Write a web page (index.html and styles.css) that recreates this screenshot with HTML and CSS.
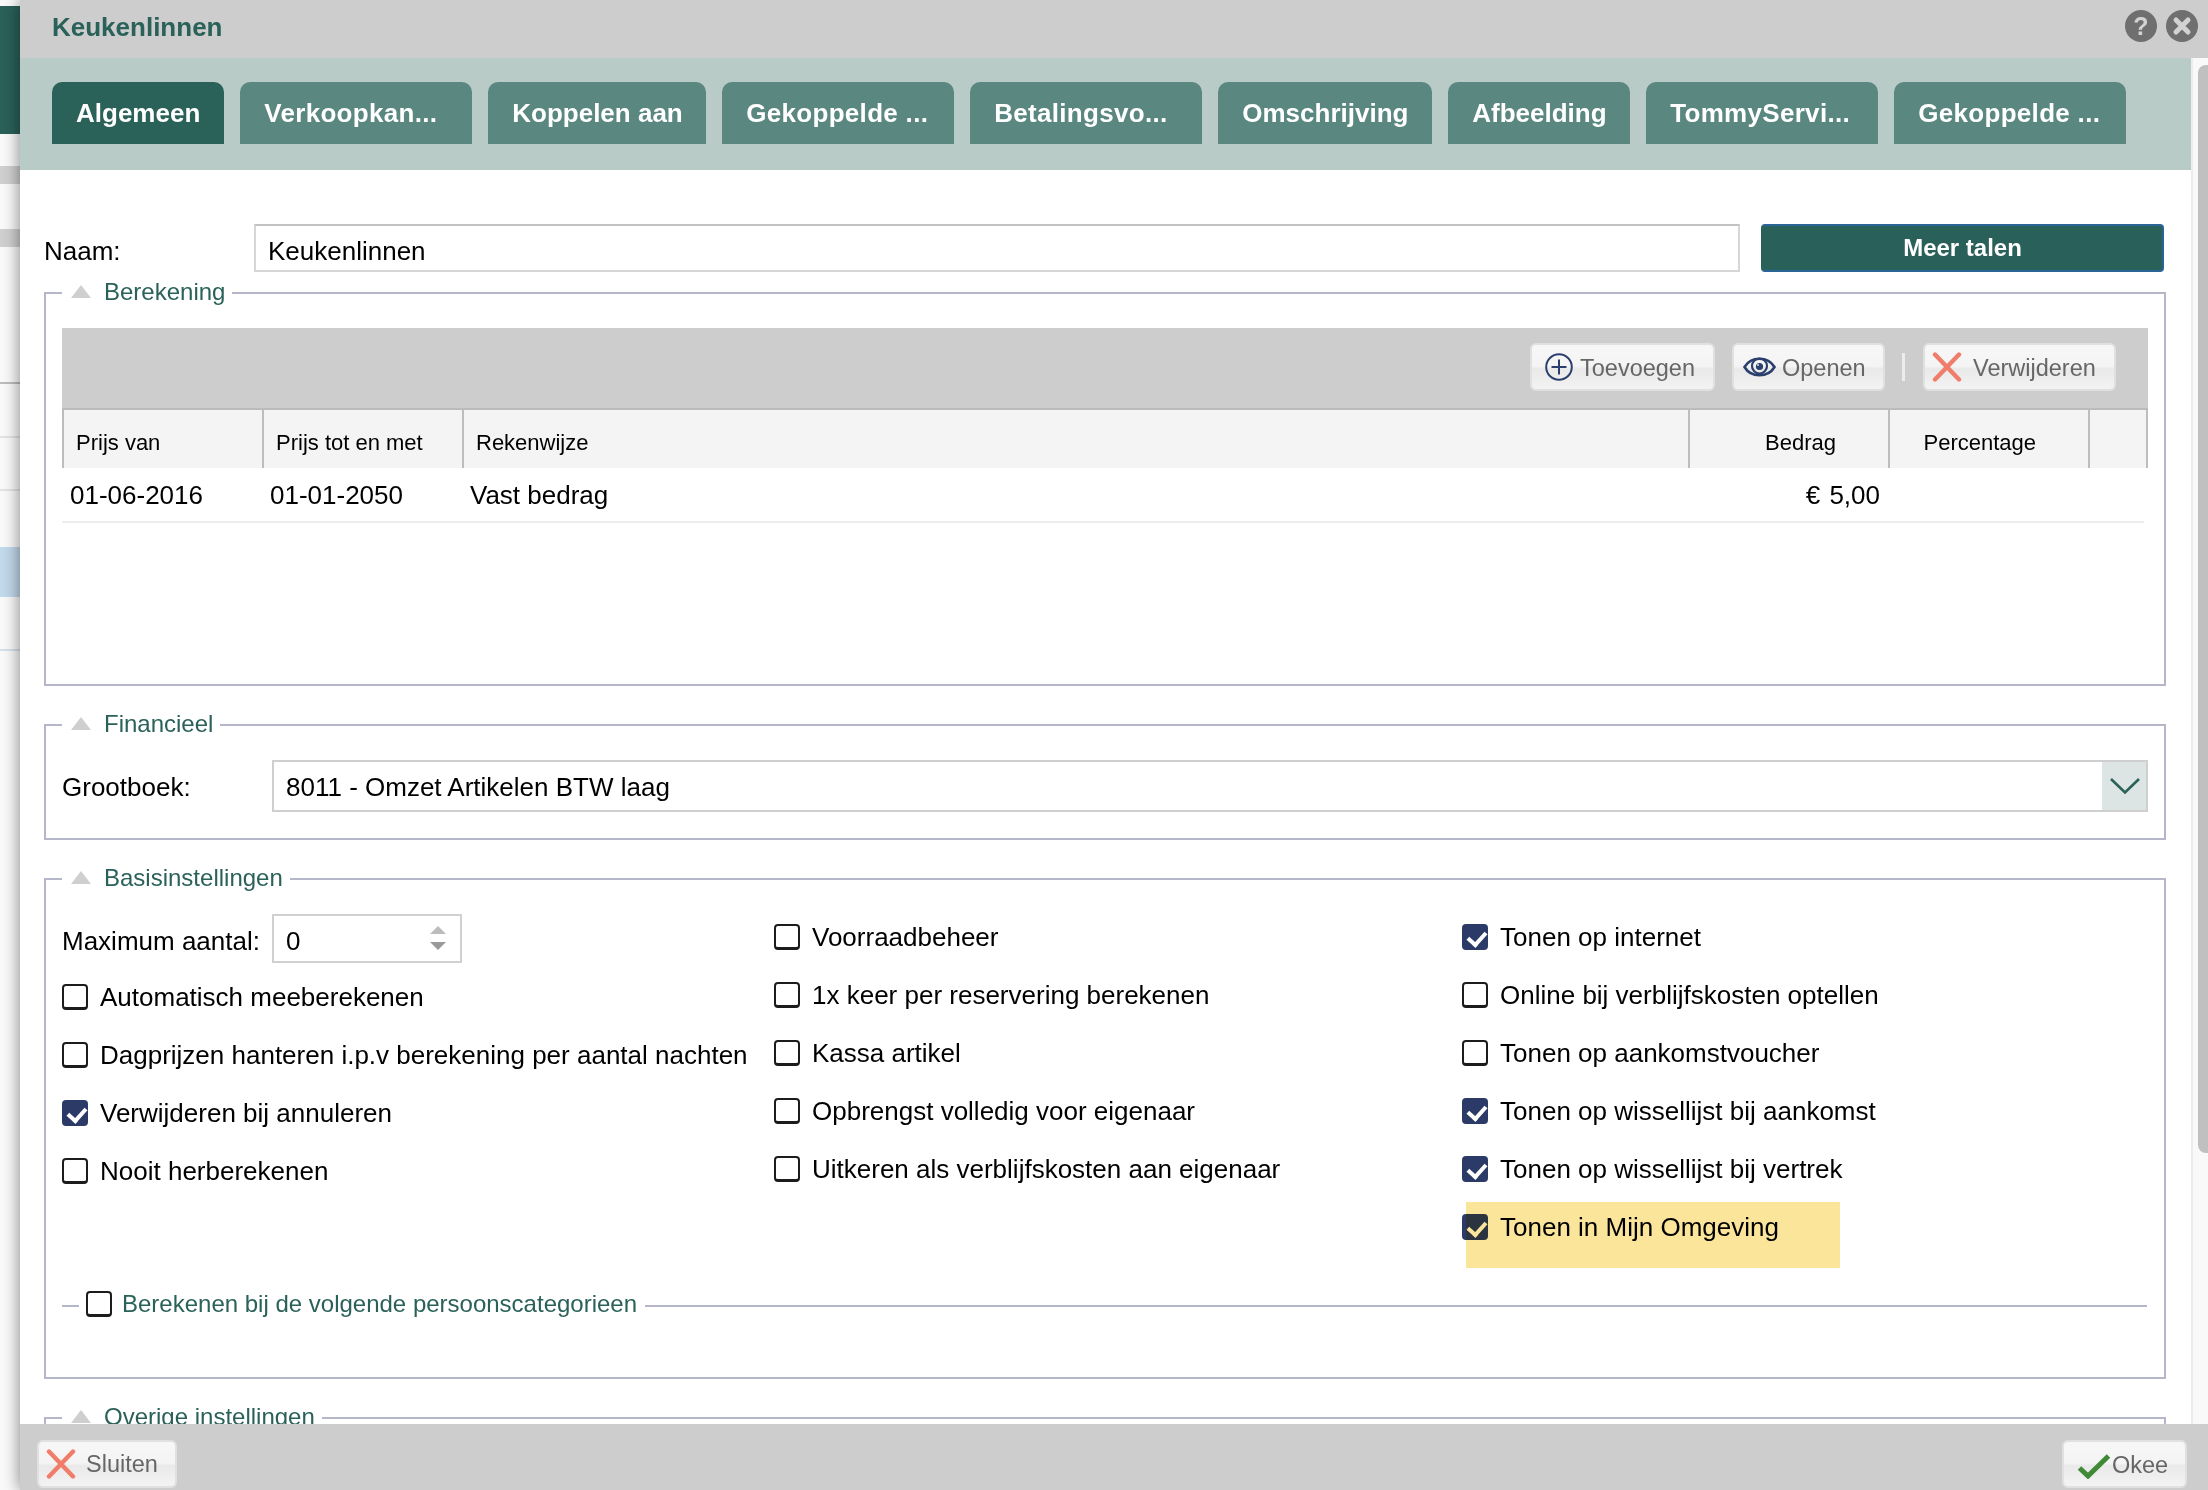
FILE: index.html
```html
<!DOCTYPE html>
<html lang="nl">
<head>
<meta charset="utf-8">
<title>Keukenlinnen</title>
<link rel="stylesheet" href="styles.css">
</head>
<body>
<div class="desktop">
  <aside class="backdrop">
    <div class="bd-brand"></div>
    <div class="bd-bar bd-bar--a"></div>
    <div class="bd-bar bd-bar--b"></div>
    <div class="bd-line bd-line--a"></div>
    <div class="bd-line bd-line--b"></div>
    <div class="bd-line bd-line--c"></div>
    <div class="bd-selected"></div>
    <div class="bd-line bd-line--d"></div>
  </aside>
  <div class="dialog">
    <header class="titlebar">
      <h1 class="title">Keukenlinnen</h1>
      <div class="title-actions">
        <span class="round-btn round-btn--help">?</span>
        <span class="round-btn">
          <svg viewBox="0 0 32 32" width="32" height="32"><path d="M10 10 22 22M22 10 10 22" stroke="#d2d2d2" stroke-width="5" stroke-linecap="round" fill="none"/></svg>
        </span>
      </div>
    </header>
    <div class="body">
      <main class="main">
        <nav class="tabs">
          <span class="tab tab--active">Algemeen</span>
          <span class="tab tab--wide">Verkoopkan...</span>
          <span class="tab tab--koppelen">Koppelen aan</span>
          <span class="tab tab--wide">Gekoppelde ...</span>
          <span class="tab tab--wide">Betalingsvo...</span>
          <span class="tab tab--omschrijving">Omschrijving</span>
          <span class="tab tab--afbeelding">Afbeelding</span>
          <span class="tab tab--wide">TommyServi...</span>
          <span class="tab tab--wide">Gekoppelde ...</span>
        </nav>
        <form class="form">
          <div class="name-row">
            <label class="name-label">Naam:</label>
            <div class="field field--name">Keukenlinnen</div>
            <button type="button" class="primary">Meer talen</button>
          </div>

          <fieldset class="group group--calc">
            <legend class="group-legend"><i class="caret"></i>Berekening</legend>
            <div class="toolbar">
              <button type="button" class="btn btn--add">
                <svg class="icon" viewBox="0 0 28 28" width="28" height="28"><circle cx="14" cy="14" r="12.800" fill="none" stroke="#2b3f6e" stroke-width="2"/><path d="M14 6.500v15M6.500 14h15" stroke="#2b3f6e" stroke-width="2" fill="none"/></svg>
                Toevoegen
              </button>
              <button type="button" class="btn btn--open">
                <svg class="icon" viewBox="0 0 33 24" width="33" height="24"><path d="M1.500 12C8 1 25 1 31.500 12 25 23 8 23 1.500 12Z" fill="none" stroke="#2b3f6e" stroke-width="2.600" stroke-linejoin="miter"/><circle cx="16.500" cy="11" r="7.500" fill="none" stroke="#2b3f6e" stroke-width="2.200"/><circle cx="16.500" cy="11.500" r="3.600" fill="#2b3f6e"/><circle cx="15" cy="10" r="1" fill="#dfe3ec"/></svg>
                Openen
              </button>
              <span class="toolbar-sep"></span>
              <button type="button" class="btn btn--cross">
                <svg class="icon" viewBox="0 0 30 30" width="30" height="30"><path d="M3 2.500 27 27.500M27 2.500 3 27.500" stroke="#ef7d69" stroke-width="4.400" stroke-linecap="round" fill="none"/></svg>
                Verwijderen
              </button>
            </div>
            <div class="grid-head">
              <div class="th th--first">Prijs van</div>
              <div class="th">Prijs tot en met</div>
              <div class="th">Rekenwijze</div>
              <div class="th th--num">Bedrag</div>
              <div class="th th--num">Percentage</div>
              <div class="th"></div>
            </div>
            <div class="grid-row">
              <div class="td td--first">01-06-2016</div>
              <div class="td">01-01-2050</div>
              <div class="td">Vast bedrag</div>
              <div class="td td--num">€ 5,00</div>
              <div class="td"></div>
              <div class="td"></div>
            </div>
          </fieldset>

          <fieldset class="group group--fin">
            <legend class="group-legend"><i class="caret"></i>Financieel</legend>
            <div class="ledger-row">
              <label class="ledger-label">Grootboek:</label>
              <div class="field field--select">
                <span class="select-value">8011 - Omzet Artikelen BTW laag</span>
                <span class="select-btn">
                  <svg viewBox="0 0 32 18" width="32" height="18"><path d="M2 2 16 15.500 30 2" fill="none" stroke="#2a6159" stroke-width="2.600"/></svg>
                </span>
              </div>
            </div>
          </fieldset>

          <fieldset class="group group--basis">
            <legend class="group-legend"><i class="caret"></i>Basisinstellingen</legend>
            <div class="columns">
              <div class="col">
                <div class="max-row">
                  <label class="max-label">Maximum aantal:</label>
                  <div class="field field--number">
                    <span>0</span>
                    <span class="spin"><i class="spin-up"></i><i class="spin-down"></i></span>
                  </div>
                </div>
                <div class="check"><span class="cb"></span>Automatisch meeberekenen</div>
                <div class="check"><span class="cb"></span>Dagprijzen hanteren i.p.v berekening per aantal nachten</div>
                <div class="check"><span class="cb cb--on"></span>Verwijderen bij annuleren</div>
                <div class="check"><span class="cb"></span>Nooit herberekenen</div>
              </div>
              <div class="col col--offset">
                <div class="check"><span class="cb"></span>Voorraadbeheer</div>
                <div class="check"><span class="cb"></span>1x keer per reservering berekenen</div>
                <div class="check"><span class="cb"></span>Kassa artikel</div>
                <div class="check"><span class="cb"></span>Opbrengst volledig voor eigenaar</div>
                <div class="check"><span class="cb"></span>Uitkeren als verblijfskosten aan eigenaar</div>
              </div>
              <div class="col col--offset">
                <div class="check"><span class="cb cb--on"></span>Tonen op internet</div>
                <div class="check"><span class="cb"></span>Online bij verblijfskosten optellen</div>
                <div class="check"><span class="cb"></span>Tonen op aankomstvoucher</div>
                <div class="check"><span class="cb cb--on"></span>Tonen op wissellijst bij aankomst</div>
                <div class="check"><span class="cb cb--on"></span>Tonen op wissellijst bij vertrek</div>
                <div class="check check--marked"><span class="cb cb--on"></span>Tonen in Mijn Omgeving<span class="marker"></span></div>
              </div>
            </div>
            <fieldset class="subgroup">
              <legend class="sub-legend"><span class="cb"></span>Berekenen bij de volgende persoonscategorieen</legend>
            </fieldset>
          </fieldset>

          <fieldset class="group group--rest">
            <legend class="group-legend"><i class="caret"></i>Overige instellingen</legend>
          </fieldset>
        </form>
      </main>
      <div class="scrollbar"><div class="thumb"></div></div>
    </div>
    <footer class="footer">
      <button type="button" class="btn btn--cross btn--close">
        <svg class="icon" viewBox="0 0 30 30" width="30" height="30"><path d="M3 2.500 27 27.500M27 2.500 3 27.500" stroke="#ef7d69" stroke-width="4.400" stroke-linecap="round" fill="none"/></svg>
        Sluiten
      </button>
      <button type="button" class="btn btn--ok">
        <svg class="icon" viewBox="0 0 34 26" width="34" height="26"><path d="M2.500 15 11 23 31.500 3" stroke="#3f8a36" stroke-width="5" fill="none"/></svg>
        Okee
      </button>
    </footer>
  </div>
</div>
</body>
</html>
```

FILE: styles.css
```css
* { box-sizing: border-box; }
html, body { margin: 0; height: 100%; }
body { font-family: "Liberation Sans", Arial, sans-serif; font-size: 26px; color: #000; background: #fff; overflow: hidden; }

.desktop { display: flex; width: 2208px; height: 1490px; overflow: hidden; }

/* underlying page, visible in the strip on the left */
.backdrop { width: 20px; flex: none; background: #fafafa; padding-top: 6px; }
.bd-brand { height: 128px; background: #2a6159; }
.bd-bar { height: 18px; background: #d0d0d0; }
.bd-bar--a { margin-top: 32px; }
.bd-bar--b { margin-top: 45px; }
.bd-line { height: 2px; background: #e4e4e4; }
.bd-line--a { margin-top: 135px; background: #bdbdbd; }
.bd-line--b { margin-top: 52px; }
.bd-line--c { margin-top: 51px; }
.bd-selected { height: 50px; margin-top: 56px; background: #c3d9ec; }
.bd-line--d { margin-top: 52px; background: #d5e2ee; }

.dialog { width: 2188px; flex: none; display: flex; flex-direction: column; background: #fff; box-shadow: 0 0 16px rgba(0, 0, 0, .5); position: relative; }

.titlebar { height: 58px; flex: none; background: #cdcdcd; display: flex; align-items: center; justify-content: space-between; padding: 0 10px 6px 32px; }
.title { margin: 2px 0 0; font-size: 26px; font-weight: bold; color: #2a6159; }
.title-actions { display: flex; gap: 9px; }
.round-btn { width: 32px; height: 32px; border-radius: 50%; background: #6f6f6f; color: #d2d2d2; font-weight: bold; font-size: 25px; display: flex; align-items: center; justify-content: center; }

.body { flex: 1; min-height: 0; display: flex; }
.main { width: 2171px; flex: none; overflow: hidden; }

.tabs { height: 112px; background: #b8cbc7; display: flex; gap: 16px; padding: 24px 0 0 32px; }
.tab { height: 62px; padding: 0 24px; line-height: 62px; background: #5a8780; color: #fff; font-weight: bold; font-size: 26px; border-radius: 10px 10px 0 0; white-space: nowrap; flex: none; }
.tab--active { background: #2a6159; }
.tab--wide { width: 232px; letter-spacing: .3px; }
.tab--koppelen { width: 218px; }
.tab--omschrijving { width: 214px; }
.tab--afbeelding { width: 182px; }

.form { padding: 54px 25px 0 24px; }

.name-row { display: flex; align-items: center; height: 48px; }
.name-label { width: 210px; padding-top: 6px; }
.field { border: 2px solid #d6d6d6; border-top-color: #c2c2c2; background: #fff; }
.field--name { width: 1486px; height: 48px; line-height: 46px; padding: 2px 0 0 12px; }
.primary { margin-left: 21px; width: 403px; height: 48px; padding: 0; background: #29615a; border: 2px solid #2a6496; border-left-color: #29615a; border-radius: 4px; color: #fff; font: bold 24px "Liberation Sans", Arial, sans-serif; }

.group { margin: 25px 0 0; padding: 0 16px; border: 2px solid #b5b6c9; min-width: 0; }
.group--calc { margin-top: 7px; padding-top: 21px; padding-bottom: 161px; }
.group--fin { padding-top: 21px; padding-bottom: 26px; }
.group--basis { padding-top: 21px; padding-bottom: 52px; }
.group--rest { height: 100px; }

.group-legend { display: flex; align-items: center; height: 28px; margin-left: 0; padding: 0 7px 2px 9px; font-size: 24px; color: #2a6159; }
.caret { width: 0; height: 0; margin-right: 13px; margin-bottom: 1px; border-left: 10.500px solid transparent; border-right: 10.500px solid transparent; border-bottom: 13px solid #cfcfcf; }

.toolbar { height: 82px; display: flex; align-items: center; justify-content: flex-end; padding: 0 32px 2px 0; background: #cdcdcd; border-bottom: 2px solid #bbb; }
.btn { display: inline-flex; align-items: center; height: 48px; border: 2px solid #e0e0e0; border-radius: 6px; background: linear-gradient(#f7f7f7, #f4f4f4 48%, #e9e9e9 54%, #f3f3f3); color: #666; font: 23.500px "Liberation Sans", Arial, sans-serif; white-space: nowrap; }
.btn--add { width: 185px; padding: 2px 0 0 13px; }
.btn--add .icon { margin: -2px 7px 0 0; }
.btn--open { width: 153px; margin-left: 17px; padding: 2px 0 0 9px; }
.btn--open .icon { margin: -2px 6px 0 0; }
.btn--cross { width: 193px; padding: 2px 0 0 7px; }
.btn--cross .icon { margin: -2px 11px 0 0; }
.toolbar-sep { width: 3px; height: 28px; margin: 0 18px 0 17px; background: #ececec; }

.grid-head, .grid-row { display: grid; grid-template-columns: 202px 200px 1226px 200px 200px 58px; }
.grid-head { height: 58px; background: #f4f4f4; font-size: 22px; }
.th { border-right: 2px solid #bdbdbd; padding: 8px 0 0 12px; line-height: 50px; }
.th--first { border-left: 2px solid #bdbdbd; padding-left: 12px; }
.th--num { padding: 8px 52px 0 0; text-align: right; }
.grid-row { grid-template-columns: 202px 200px 1226px 200px 200px 54px; margin-right: 4px; height: 55px; border-bottom: 2px solid #ececec; line-height: 53px; }
.td { padding-top: 1px; padding-left: 6px; }
.td--first { padding-left: 8px; }
.td--num { padding: 1px 10px 0 0; text-align: right; word-spacing: 2px; }

.ledger-row { display: flex; align-items: center; }
.ledger-label { width: 210px; padding-top: 2px; }
.field--select { flex: 1; height: 52px; display: flex; justify-content: space-between; border-color: #cfcfcf; line-height: 48px; }
.select-value { padding: 1px 0 0 12px; }
.select-btn { width: 44px; height: 100%; padding-left: 2px; background: #dce5e3; display: flex; align-items: center; justify-content: center; }

.columns { display: grid; grid-template-columns: 712px 688px 1fr; }
.col--offset { padding-top: 10px; }
.max-row { display: flex; align-items: center; height: 49px; margin-bottom: 21px; }
.max-label { width: 210px; padding-top: 6px; }
.field--number { width: 190px; height: 49px; display: flex; align-items: center; justify-content: space-between; padding: 6px 14px 0 12px; border-color: #d0d0d0; }
.spin { display: flex; flex-direction: column; gap: 8px; margin-top: -8px; }
.spin-up, .spin-down { width: 0; height: 0; border-left: 8px solid transparent; border-right: 8px solid transparent; }
.spin-up { border-bottom: 8px solid #bcbcbc; }
.spin-down { border-top: 8px solid #9a9a9a; }

.check { display: flex; align-items: flex-start; height: 58px; line-height: 26px; white-space: nowrap; position: relative; }
.cb { width: 26px; height: 26px; flex: none; margin-right: 12px; border: 2px solid #1c1c1c; border-bottom-width: 3px; border-radius: 4px; background: #fff; position: relative; }
.cb--on { background: #2b3a67; border-color: #2b3a67; }
.cb--on::after { content: ""; position: absolute; left: 7px; top: 2px; width: 8px; height: 14px; border: solid #fff; border-width: 0 4px 4px 0; transform: rotate(42deg); }
.marker { position: absolute; left: 4px; top: -12px; width: 374px; height: 66px; background: #fbe59b; mix-blend-mode: multiply; }

.subgroup { margin: 19px 1px 0 0; padding: 0; height: 34px; border: 0; border-top: 2px solid #b5b6c9; min-width: 0; }
.sub-legend { display: flex; align-items: flex-start; height: 30px; margin-left: 17px; padding: 0 8px 0 7px; font-size: 24px; line-height: 26px; color: #2a6159; }
.sub-legend .cb { margin-right: 10px; }

.scrollbar { flex: 1; border-left: 2px solid #ececec; background: #f9f9f9; padding: 7px 0 0 5px; }
.thumb { height: 1088px; background: #c0c0c0; border-radius: 8px 0 0 8px; }

.footer { height: 66px; flex: none; background: #cdcdcd; display: flex; justify-content: space-between; padding: 16px 21px 0 17px; }
.btn--close { width: 140px; padding-top: 0; }
.btn--close .icon { margin: 0 10px 0 0; }
.btn--ok { width: 125px; padding: 2px 0 0 13px; }
.btn--ok .icon { margin: 2px 1px 0 0; }
```
